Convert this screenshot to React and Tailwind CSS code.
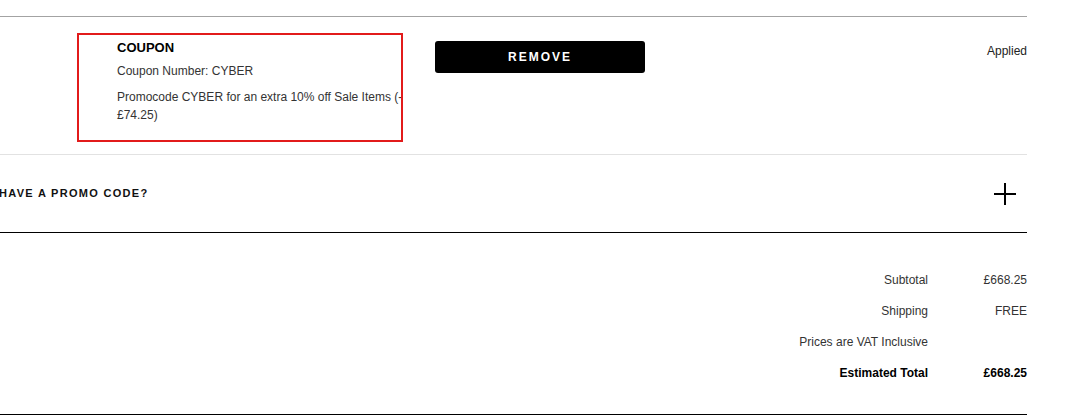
import React from "react";

// === ICONS ===
const PlusIcon = () => (
  <svg width="22" height="22" viewBox="0 0 22 22" fill="none" stroke="currentColor" strokeWidth="2">
    <line x1="11" y1="0" x2="11" y2="22" />
    <line x1="0" y1="11" x2="22" y2="11" />
  </svg>
);

const rows = [
  { label: "Subtotal", value: "£668.25" },
  { label: "Shipping", value: "FREE" },
  { label: "Prices are VAT Inclusive", value: "" },
  { label: "Estimated Total", value: "£668.25", bold: true },
];

const App = () => {
  return (
    <div
      className="relative w-[1068px] h-[415px] overflow-hidden bg-white text-[#333]"
      style={{ fontFamily: '"Liberation Sans", Arial, sans-serif' }}
    >
      <div className="w-[1027px] pt-4">
        {/* Coupon row */}
        <div className="relative flex border-t border-[#a3a3a3] pb-[30px]">
          <div className="ml-[117px] w-[300px] pt-[23px]">
            <div className="text-[13px] leading-4 font-bold text-black">COUPON</div>
            <div className="mt-[6px] text-[12px] leading-[18px]">Coupon Number: CYBER</div>
            <div className="mt-2 text-[12px] leading-[18px]">
              Promocode CYBER for an extra 10% off Sale Items (-
              <br />
              £74.25)
            </div>
          </div>
          <div className="ml-[18px] pt-6">
            <button
              type="button"
              className="w-[210px] h-8 rounded-[3px] bg-black text-white text-[12px] font-bold tracking-[2px]"
            >
              REMOVE
            </button>
          </div>
          <div className="ml-auto pt-[25px] text-[12px] leading-[18px] text-[#222]">Applied</div>

          {/* highlight frame */}
          <div className="absolute left-[77px] top-4 w-[326px] h-[109px] border-2 border-[#e21b1b]" />
        </div>

        {/* Promo code */}
        <div className="flex items-center justify-between h-[79px] border-t border-[#e2e2e2] border-b border-b-black">
          <span className="text-[11px] font-bold tracking-[1.3px] text-[#111] -ml-px">HAVE A PROMO CODE?</span>
          <span className="mr-[11px] text-black">
            <PlusIcon />
          </span>
        </div>

        {/* Totals */}
        <div className="pt-[38px] h-[182px] border-b border-black">
          {rows.map((row) => (
            <div
              key={row.label}
              className={`flex justify-end h-[31px] text-[12px] leading-[18px] ${
                row.bold ? "font-bold text-black" : ""
              }`}
            >
              <span className="text-right">{row.label}</span>
              <span className="w-[99px] text-right">{row.value}</span>
            </div>
          ))}
        </div>
      </div>
    </div>
  );
};

export default App;
